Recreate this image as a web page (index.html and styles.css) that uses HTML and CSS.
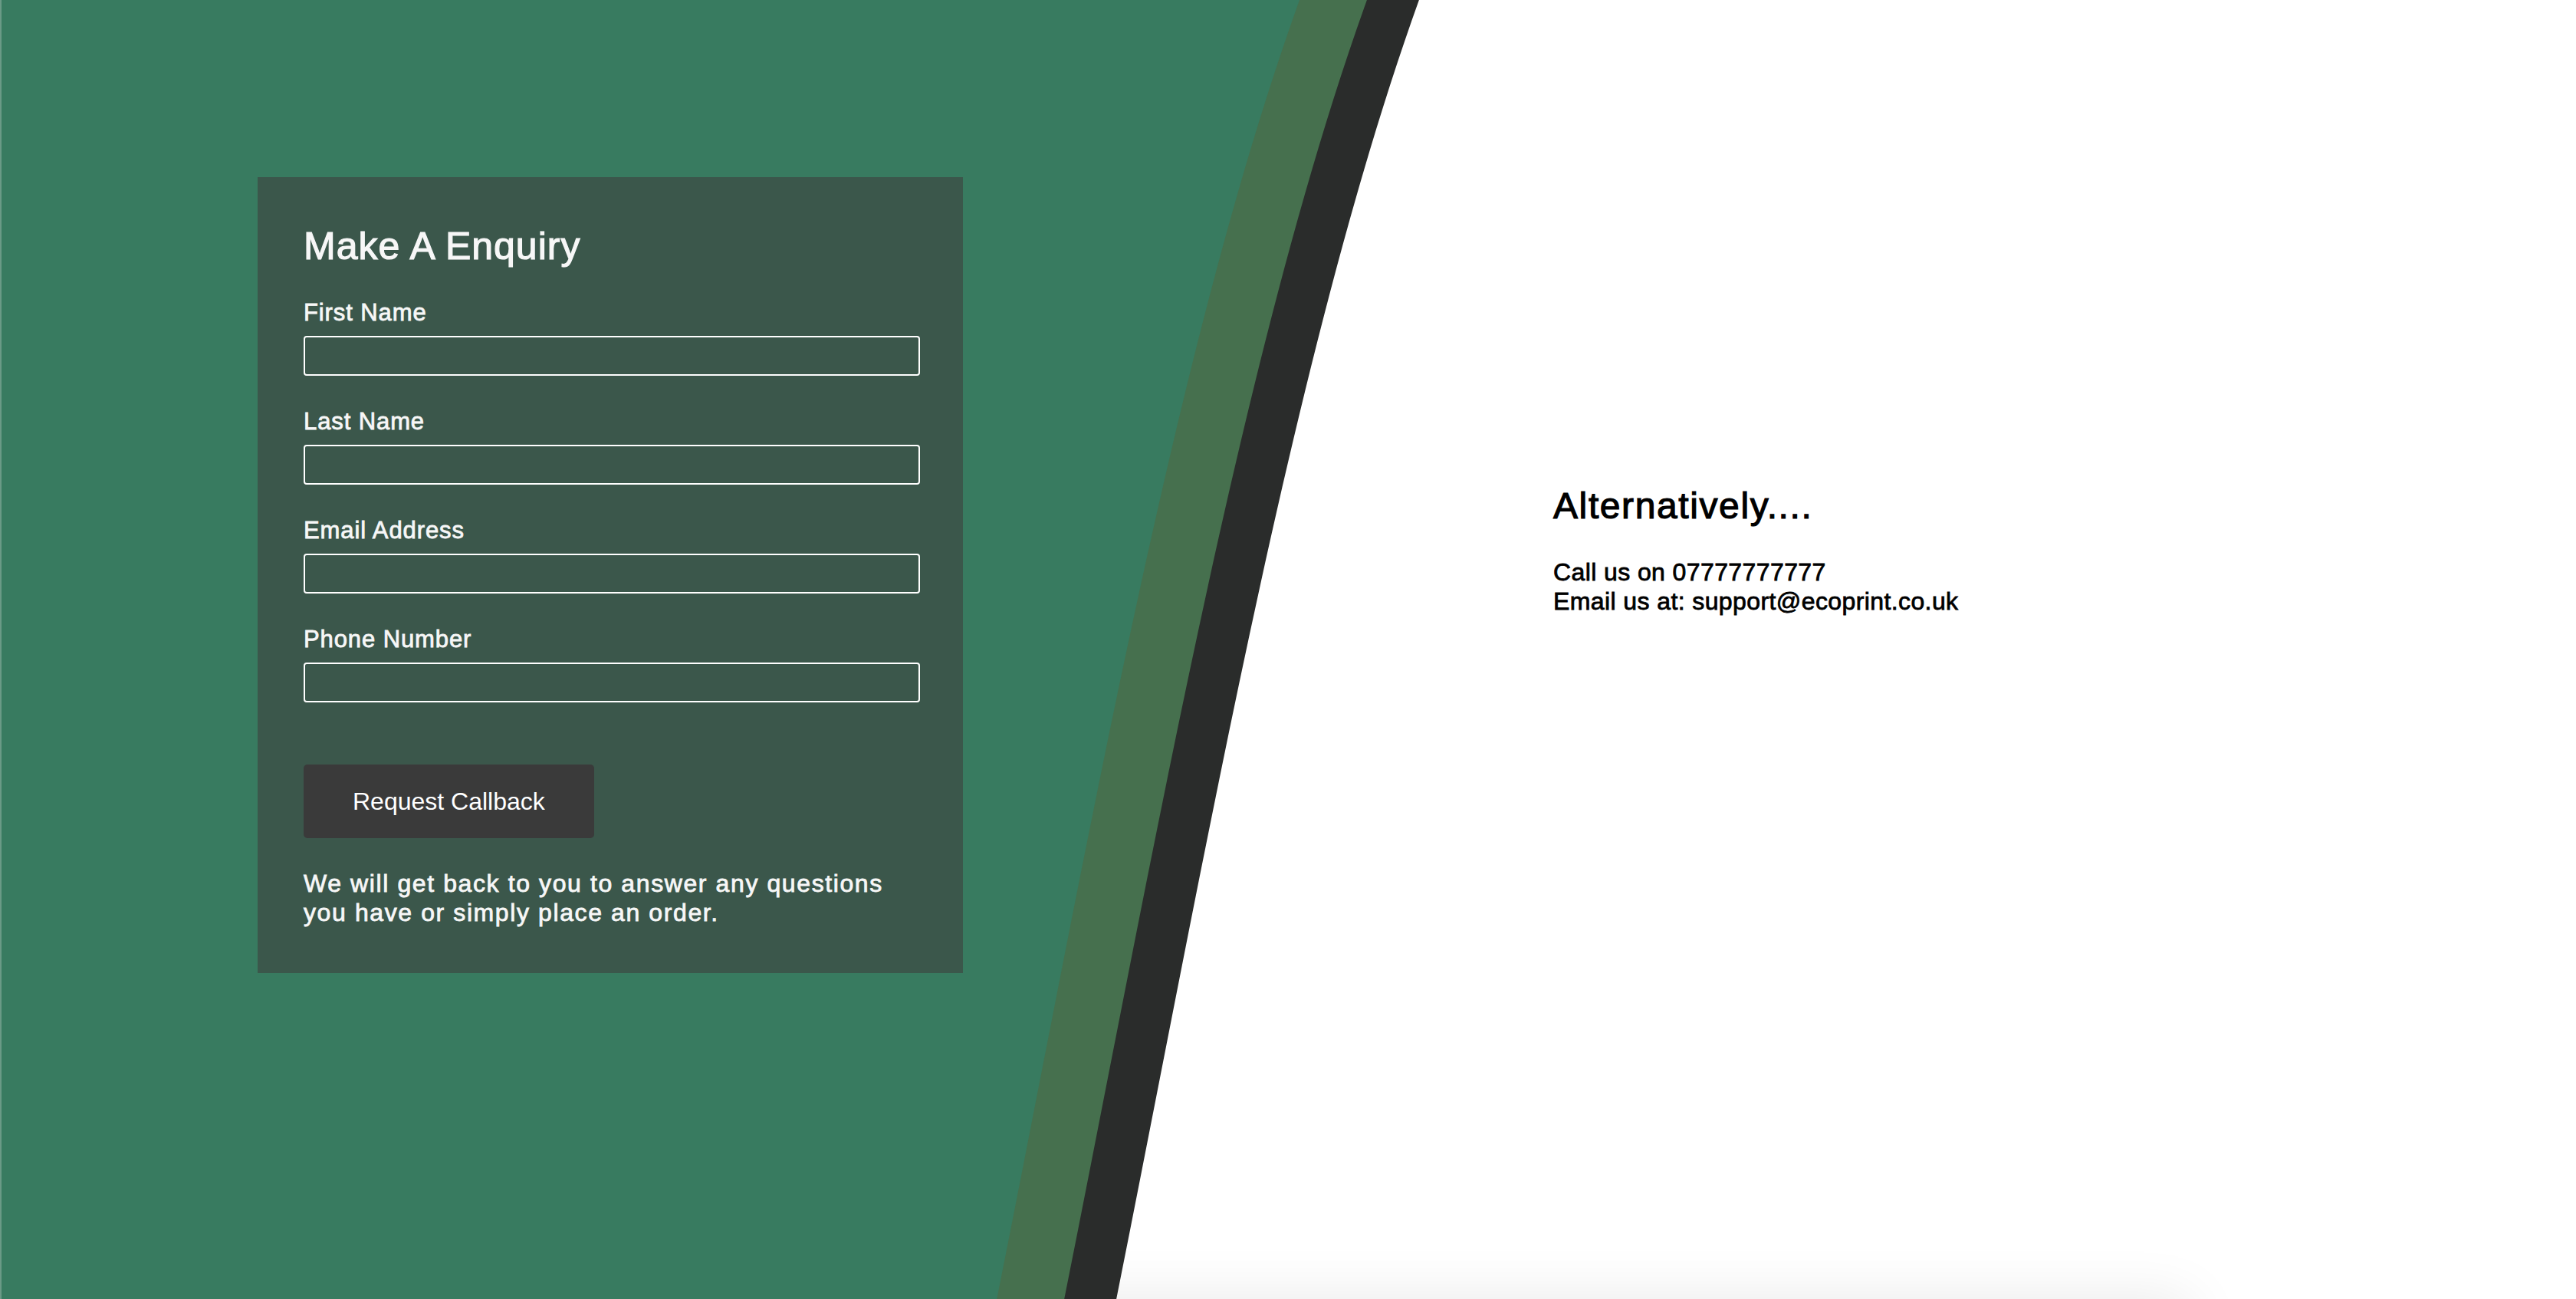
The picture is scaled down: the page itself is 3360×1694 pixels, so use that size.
FILE: index.html
```html
<!DOCTYPE html>
<html lang="en">
<head>
<meta charset="utf-8">
<title>Make A Enquiry</title>
<link rel="stylesheet" href="styles.css">
</head>
<body>
<main class="hero">
  <div class="below-shadow" aria-hidden="true"></div>
  <svg class="hero-bg" viewBox="0 0 3360 1694" preserveAspectRatio="none" aria-hidden="true">
    <path class="band-dark" d="M-300,0 H1850 C1688,450 1575,1094 1455,1694 H-300 Z"/>
    <path class="band-olive" d="M-300,0 H1782 C1620,450 1507,1094 1387,1694 H-300 Z"/>
    <path class="band-green" d="M-300,0 H1694 C1532,450 1419,1094 1299,1694 H-300 Z"/>
  </svg>
  <div class="hero-content">
    <form class="enquiry-card">
      <h2 class="card-title">Make A Enquiry</h2>
      <div class="fields">
        <div class="field">
          <label class="field-label" for="fname">First Name</label>
          <input class="field-input" id="fname" type="text">
        </div>
        <div class="field">
          <label class="field-label" for="lname">Last Name</label>
          <input class="field-input" id="lname" type="text">
        </div>
        <div class="field">
          <label class="field-label" for="email">Email Address</label>
          <input class="field-input" id="email" type="text">
        </div>
        <div class="field">
          <label class="field-label" for="phone">Phone Number</label>
          <input class="field-input" id="phone" type="text">
        </div>
      </div>
      <button class="callback-btn" type="button">Request Callback</button>
      <p class="card-note">We will get back to you to answer any questions you have or simply place an order.</p>
    </form>
    <section class="alt-contact">
      <h2 class="alt-title">Alternatively....</h2>
      <p class="alt-text">Call us on 07777777777<br>Email us at: support@ecoprint.co.uk</p>
    </section>
  </div>
</main>
</body>
</html>
```
FILE: styles.css
```css
html, body {
  margin: 0;
  padding: 0;
  overflow: hidden;
  background: #ffffff;
}

body {
  font-family: "Liberation Sans", Arial, sans-serif;
}

.hero {
  display: grid;
  width: 3360px;
  height: 1694px;
  box-sizing: border-box;
  border-left: 2px solid #6a9a86;
  overflow: hidden;
}

.below-shadow,
.hero-bg,
.hero-content {
  grid-area: 1 / 1;
}

/* soft shadow cast by the section that follows below the fold */
.below-shadow {
  align-self: end;
  justify-self: center;
  width: 70%;
  height: 300px;
  margin-bottom: -300px;
  background: #ffffff;
  box-shadow: 0 0 70px rgba(0, 0, 0, 0.09);
}

.hero-bg {
  width: 100%;
  height: 100%;
  display: block;
}

.band-green { fill: #387b60; }
.band-olive { fill: #46704e; }
.band-dark { fill: #2a2c2b; }

.hero-content {
  display: flex;
  align-items: flex-start;
  padding: 231px 0 0 334px;
}

.enquiry-card {
  width: 920px;
  box-sizing: border-box;
  background: #3b574b;
  padding: 60px 56px 60px 60px;
  color: #f7f7f7;
}

.card-title {
  margin: 0 0 37px;
  font-size: 50px;
  line-height: 60px;
  font-weight: normal;
  letter-spacing: 1px;
  -webkit-text-stroke: 1.2px #f7f7f7;
}

.fields {
  display: flex;
  flex-direction: column;
  gap: 40px;
}

.field {
  display: flex;
  flex-direction: column;
  gap: 10px;
}

.field-label {
  font-size: 31px;
  line-height: 40px;
  letter-spacing: 0.9px;
  -webkit-text-stroke: 0.8px #f7f7f7;
}

.field-input {
  display: block;
  width: 100%;
  height: 52px;
  box-sizing: border-box;
  margin: 0;
  border: 2px solid #ffffff;
  border-radius: 4px;
  background: transparent;
  color: #ffffff;
  font: inherit;
  padding: 0 12px;
}

.callback-btn {
  display: block;
  margin: 81px 0 0;
  padding: 30px 64px;
  border: 0;
  border-radius: 5px;
  background: #3a3a3a;
  color: #ffffff;
  font-family: "Liberation Sans", Arial, sans-serif;
  font-size: 32px;
  line-height: 36px;
}

.card-note {
  margin: 40px 0 0;
  max-width: 790px;
  font-size: 32px;
  line-height: 38px;
  letter-spacing: 1.6px;
  -webkit-text-stroke: 0.8px #f7f7f7;
}

.alt-contact {
  margin-left: 770px;
  padding-top: 400px;
  color: #000000;
}

.alt-title {
  margin: 0 0 38px;
  font-size: 48px;
  line-height: 58px;
  font-weight: normal;
  letter-spacing: 1.6px;
  -webkit-text-stroke: 1.2px #000000;
}

.alt-text {
  margin: 0;
  font-size: 32px;
  line-height: 38px;
  letter-spacing: 0.4px;
  -webkit-text-stroke: 0.8px #000000;
}
```
